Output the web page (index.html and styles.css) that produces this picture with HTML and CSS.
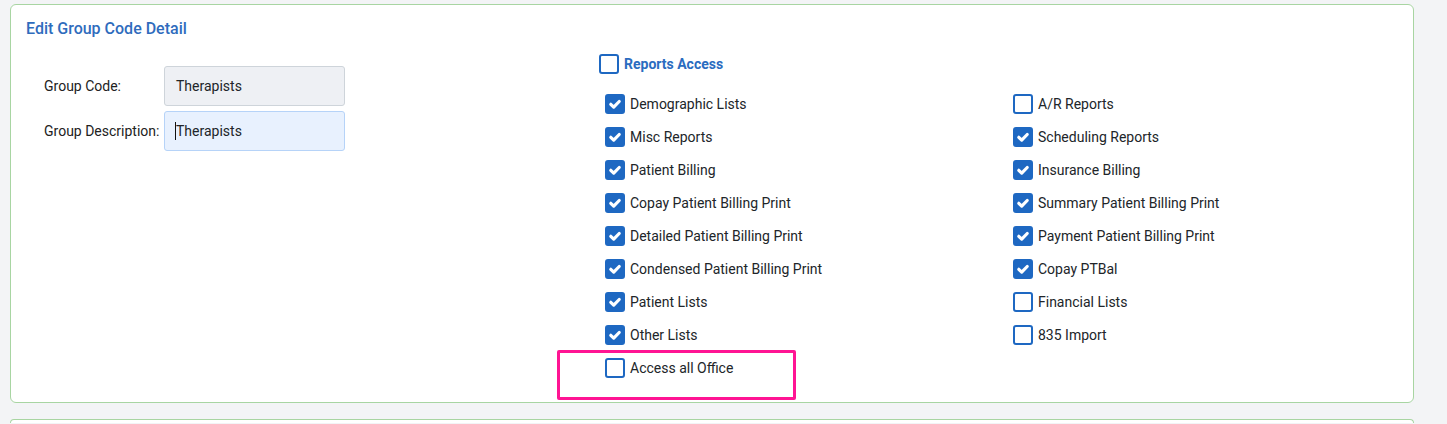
FILE: index.html
```html
<!DOCTYPE html>
<html>
<head>
<meta charset="utf-8">
<link rel="stylesheet" href="styles.css">
</head>
<body>
<div class="card">
  <div class="card-title">Edit Group Code Detail</div>
  <div class="content">
    <div class="form">
      <div class="form-row">
        <label class="form-label">Group Code:</label>
        <div class="input input-disabled">Therapists</div>
      </div>
      <div class="form-row">
        <label class="form-label">Group Description:</label>
        <div class="input input-focus"><span class="caret"></span>Therapists</div>
      </div>
    </div>
    <div class="reports">
      <div class="reports-header">
        <span class="cb"></span>
        <span class="reports-title">Reports Access</span>
      </div>
      <div class="reports-grid">
        <div class="item"><span class="cb cb-on"><svg viewBox="0 0 20 20"><path d="M5.8 10.3l2.9 2.8 5.5-5.6"/></svg></span>Demographic Lists</div>
        <div class="item"><span class="cb"></span>A/R Reports</div>
        <div class="item"><span class="cb cb-on"><svg viewBox="0 0 20 20"><path d="M5.8 10.3l2.9 2.8 5.5-5.6"/></svg></span>Misc Reports</div>
        <div class="item"><span class="cb cb-on"><svg viewBox="0 0 20 20"><path d="M5.8 10.3l2.9 2.8 5.5-5.6"/></svg></span>Scheduling Reports</div>
        <div class="item"><span class="cb cb-on"><svg viewBox="0 0 20 20"><path d="M5.8 10.3l2.9 2.8 5.5-5.6"/></svg></span>Patient Billing</div>
        <div class="item"><span class="cb cb-on"><svg viewBox="0 0 20 20"><path d="M5.8 10.3l2.9 2.8 5.5-5.6"/></svg></span>Insurance Billing</div>
        <div class="item"><span class="cb cb-on"><svg viewBox="0 0 20 20"><path d="M5.8 10.3l2.9 2.8 5.5-5.6"/></svg></span>Copay Patient Billing Print</div>
        <div class="item"><span class="cb cb-on"><svg viewBox="0 0 20 20"><path d="M5.8 10.3l2.9 2.8 5.5-5.6"/></svg></span>Summary Patient Billing Print</div>
        <div class="item"><span class="cb cb-on"><svg viewBox="0 0 20 20"><path d="M5.8 10.3l2.9 2.8 5.5-5.6"/></svg></span>Detailed Patient Billing Print</div>
        <div class="item"><span class="cb cb-on"><svg viewBox="0 0 20 20"><path d="M5.8 10.3l2.9 2.8 5.5-5.6"/></svg></span>Payment Patient Billing Print</div>
        <div class="item"><span class="cb cb-on"><svg viewBox="0 0 20 20"><path d="M5.8 10.3l2.9 2.8 5.5-5.6"/></svg></span>Condensed Patient Billing Print</div>
        <div class="item"><span class="cb cb-on"><svg viewBox="0 0 20 20"><path d="M5.8 10.3l2.9 2.8 5.5-5.6"/></svg></span>Copay PTBal</div>
        <div class="item"><span class="cb cb-on"><svg viewBox="0 0 20 20"><path d="M5.8 10.3l2.9 2.8 5.5-5.6"/></svg></span>Patient Lists</div>
        <div class="item"><span class="cb"></span>Financial Lists</div>
        <div class="item"><span class="cb cb-on"><svg viewBox="0 0 20 20"><path d="M5.8 10.3l2.9 2.8 5.5-5.6"/></svg></span>Other Lists</div>
        <div class="item"><span class="cb"></span>835 Import</div>
        <div class="item item-highlight"><span class="highlight"></span><span class="cb"></span>Access all Office</div>
      </div>
    </div>
  </div>
</div>
<div class="card card-next"></div>
</body>
</html>
```

FILE: styles.css
```css
html, body {
  margin: 0;
  padding: 0;
}
body {
  background: #f3f4f6;
  font-family: Roboto, "Noto Sans", "Liberation Sans", sans-serif;
  font-size: 14px;
  color: #212529;
  padding: 4px 33px 0 10px;
  overflow: hidden;
}
.card {
  background: #fff;
  border: 1px solid #a8d5a2;
  border-radius: 6px;
  padding: 12px 15px 24px 15px;
}
.card-next {
  margin-top: 16px;
  height: 3px;
  padding: 0;
  border-bottom: none;
  border-radius: 6px 6px 0 0;
}
.card-title {
  font-size: 16px;
  line-height: 24px;
  font-weight: 500;
  color: #2f6cbd;
}
.content {
  display: flex;
}
.form {
  flex: none;
  width: 555px;
  padding-left: 18px;
  margin-top: 25px;
  display: flex;
  flex-direction: column;
  gap: 5px;
}
.form-row {
  display: flex;
  align-items: center;
}
.form-label {
  width: 120px;
  color: #222;
}
.input {
  box-sizing: border-box;
  width: 181px;
  height: 40px;
  border: 1px solid #ced4da;
  border-radius: 3px;
  padding-left: 11px;
  padding-bottom: 1px;
  display: flex;
  align-items: center;
  color: #212529;
}
.input-disabled {
  background: #eef0f4;
}
.input-focus {
  background: #e8f1fe;
  border-color: #b6d3f8;
  position: relative;
}
.caret {
  position: absolute;
  left: 10px;
  top: 10px;
  width: 1px;
  height: 18px;
  background: #111;
}
.reports {
  flex: none;
  margin-top: 13px;
}
.reports-header {
  display: flex;
  align-items: center;
  gap: 5px;
  height: 20px;
}
.reports-title {
  font-weight: 700;
  color: #2a6cc0;
}
.cb {
  box-sizing: border-box;
  width: 20px;
  height: 20px;
  border: 2px solid #1e68c2;
  border-radius: 3px;
  background: #fff;
  flex: none;
  display: inline-flex;
}
.cb-on {
  background: #1e68c2;
}
.cb-on svg {
  width: 20px;
  height: 20px;
  margin: -2px;
}
.cb-on path {
  fill: none;
  stroke: #fff;
  stroke-width: 3.2;
  stroke-linecap: round;
  stroke-linejoin: round;
}
.reports-grid {
  margin-top: 20px;
  margin-left: 6px;
  display: grid;
  grid-template-columns: 408px 408px;
  row-gap: 13px;
}
.item {
  display: flex;
  align-items: center;
  gap: 5px;
  height: 20px;
  line-height: 20px;
}
.item-highlight {
  position: relative;
}
.highlight {
  position: absolute;
  left: -48px;
  top: -8px;
  width: 239px;
  height: 50px;
  box-sizing: border-box;
  border: 3px solid #ff1493;
  border-radius: 2px;
}
```
